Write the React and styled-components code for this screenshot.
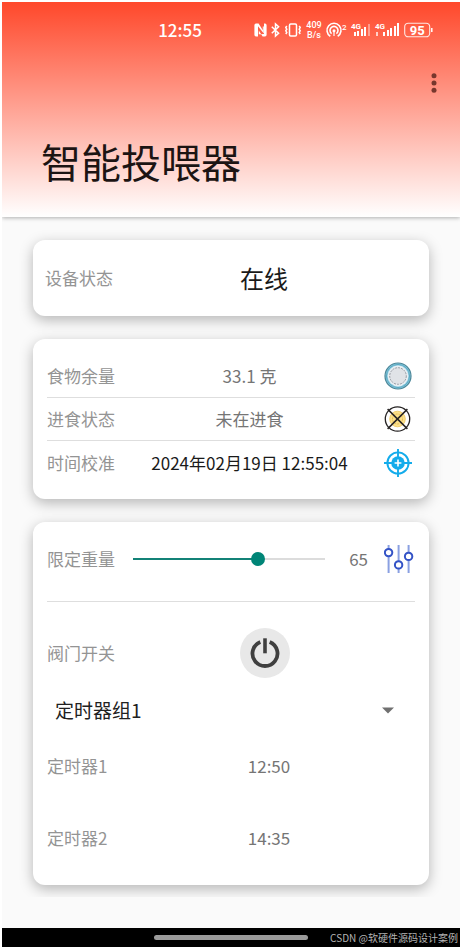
import React, { useState } from 'react';
import styled, { createGlobalStyle } from 'styled-components';

const GlobalStyle = createGlobalStyle`
  * {
    box-sizing: border-box;
  }
  body {
    margin: 0;
    background: #fff;
    font-family: 'Noto Sans CJK SC', 'Noto Sans', sans-serif;
    font-size: 17px;
    line-height: 24px;
    color: #212121;
  }
  button, select {
    font: inherit;
    color: inherit;
    border: 0;
    padding: 0;
    background: none;
    cursor: pointer;
  }
`;

const Page = styled.div`
  display: flex;
  flex-direction: column;
  min-height: 100vh;
  padding: 2px;
`;

const Header = styled.header`
  position: relative;
  z-index: 1;
  height: 215px;
  background: linear-gradient(#ff492b, #ff4f33 4%, #fff);
  box-shadow: 0 1px 4px rgba(0, 0, 0, 0.3);
  clip-path: inset(0 0 -8px 0);
`;

const StatusBar = styled.div`
  display: flex;
  align-items: center;
  justify-content: flex-end;
  height: 55px;
  padding-right: 27px;
  color: #fff;
  svg {
    display: block;
    flex: none;
    overflow: visible;
    font-family: Roboto, sans-serif;
  }
`;

const Clock = styled.time`
  margin-right: 52px;
  font-weight: 500;
`;

const StatusIcons = styled.div`
  display: flex;
  align-items: center;
  gap: 4px;
`;

const NetSpeed = styled.div`
  width: 16px;
  font-family: Roboto, sans-serif;
  font-size: 9px;
  line-height: 10px;
  font-weight: 500;
  text-align: center;
`;

const Toolbar = styled.div`
  display: flex;
  justify-content: flex-end;
  padding: 6px 14px 0 0;
`;

const MenuButton = styled.button`
  display: grid;
  place-items: center;
  width: 24px;
  height: 40px;
`;

const Title = styled.h1`
  margin: 30px 0 0 39px;
  font-size: 40px;
  line-height: 56px;
  font-weight: 400;
  color: #1c1413;
`;

const Content = styled.main`
  display: flex;
  flex-direction: column;
  gap: 23px;
  padding: 23px 31px 12px;
  overflow: hidden;
  background: #fafafa;
`;

const Filler = styled.div`
  flex: 1;
  min-height: 31px;
  background: #fafafa;
`;

const Card = styled.section`
  padding: ${(props) => props.$padding || '16px 14px 15px'};
  border-radius: 12px;
  background: #fff;
  box-shadow: 0 4px 14px rgba(0, 0, 0, 0.28);
`;

const Row = styled.div`
  display: flex;
  align-items: center;
  height: ${(props) => props.$height || 43}px;
  padding-right: ${(props) => (props.$icon ? 3 : 0)}px;
  border-bottom: ${(props) => (props.$line ? '1px solid #dedede' : '0')};
  svg {
    display: block;
  }
`;

const Label = styled.span`
  flex: none;
  min-width: ${(props) => (props.$wide ? 76 : 68)}px;
  color: #949494;
`;

const Value = styled.span`
  flex: 1;
  text-align: center;
  white-space: nowrap;
  font-size: ${(props) => (props.$large ? 24 : 17)}px;
  color: ${(props) => (props.$dark ? '#1a1a1a' : '#757575')};
`;

const IconButton = styled.button`
  flex: none;
  width: 28px;
  height: 28px;
`;

const WeightRow = styled(Row)`
  margin-bottom: 20px;
`;

const Rule = styled.hr`
  margin: 0;
  border: 0;
  border-top: 1px solid #dedede;
`;

const Slider = styled.input`
  flex: 1;
  min-width: 0;
  height: 24px;
  margin: 0 0 0 11px;
  appearance: none;
  background: none;
  &::-webkit-slider-runnable-track {
    height: 14px;
    background: linear-gradient(to right, #138277 var(--fill), #dcdcdc var(--fill)) center /
      calc(100% - 14px) 2px no-repeat;
  }
  &::-webkit-slider-thumb {
    appearance: none;
    width: 14px;
    height: 14px;
    border-radius: 50%;
    background: #008577;
  }
`;

const Weight = styled.output`
  width: 36px;
  margin-right: 16px;
  text-align: right;
  color: #757575;
`;

const ValveRow = styled(Row)`
  margin-top: 26px;
`;

const PowerWrap = styled.div`
  flex: 1;
  display: flex;
  justify-content: center;
`;

const PowerButton = styled.button`
  display: grid;
  place-items: center;
  width: 50px;
  height: 50px;
  border-radius: 50%;
  background: #e8e8e8;
`;

const GroupPicker = styled.div`
  position: relative;
  margin-top: 12px;
  select {
    width: 100%;
    height: 40px;
    padding-left: 8px;
    appearance: none;
    font-size: 19px;
  }
  svg {
    position: absolute;
    top: 17px;
    right: 21px;
    pointer-events: none;
  }
`;

const NavBar = styled.footer`
  display: grid;
  grid-template-columns: minmax(0, 1fr) 154px minmax(0, 1fr);
  align-items: center;
  height: 19px;
  background: #000;
`;

const Handle = styled.div`
  grid-column: 2;
  height: 5px;
  border-radius: 3px;
  background: #9b9b9b;
`;

const Credit = styled.small`
  padding-right: 2px;
  font-size: 10px;
  line-height: 16px;
  text-align: right;
  white-space: nowrap;
  color: #b4b4b4;
`;

const NfcIcon = () => (
  <svg width="13" height="14" viewBox="0 0 13 14" fill="currentColor">
    <path d="M2 .6h2.6l4.2 6.6V3.4h1v7L4 3.2v10.2H2A1.6 1.6 0 0 1 .4 11.8V2.2A1.6 1.6 0 0 1 2 .6z" />
    <path d="M11 13.4H8.6L4.8 7.6v3.6H5L10 11V.6h1a1.6 1.6 0 0 1 1.6 1.6v9.6a1.6 1.6 0 0 1-1.6 1.6z" />
  </svg>
);

const BluetoothIcon = () => (
  <svg width="9" height="14" viewBox="0 0 9 14" fill="none" stroke="currentColor" strokeWidth="1.5">
    <path d="M.8 3.8l6.8 6.4L4.5 13V1l3.1 2.8L.8 10.2" />
  </svg>
);

const VibrateIcon = () => (
  <svg width="18" height="14" viewBox="0 0 18 14" fill="none" stroke="currentColor" strokeWidth="1.5">
    <rect x="5.5" y="1" width="7" height="12" rx="1.2" />
    <path d="M2.8 3l-1 1.6 1 1.6-1 1.6 1 1.6-1 1.6M15.2 3l1 1.6-1 1.6 1 1.6-1 1.6 1 1.6" />
  </svg>
);

const HotspotIcon = () => (
  <svg width="21" height="16" viewBox="0 0 21 16" fill="none" stroke="currentColor" strokeWidth="1.6">
    <path d="M4.3 14.2a7 7 0 1 1 7.4 0" />
    <path d="M5.6 11.6a4 4 0 1 1 4.8 0" />
    <circle cx="8" cy="8.8" r="1.5" fill="currentColor" stroke="none" />
    <path d="M8 9v5" strokeWidth="1.2" />
    <text x="16" y="8" fontSize="8" fontWeight="500" fill="currentColor" stroke="none">2</text>
  </svg>
);

const SignalIcon = ({ bars, width }) => (
  <svg width={width} height="17" viewBox={`0 0 ${width} 17`} fill="currentColor">
    <text x="0" y="8" fontSize="8" fontWeight="700">4G</text>
    {bars.map(([x, h, opacity]) => (
      <rect key={x} x={x} y={15 - h} width="2" height={h} opacity={opacity} />
    ))}
  </svg>
);

const BatteryIcon = () => (
  <svg width="29" height="16" viewBox="0 0 29 16" fill="none" stroke="currentColor">
    <rect x=".7" y="1.2" width="25" height="13.6" rx="3.6" strokeWidth="1.1" opacity=".85" />
    <path d="M27.8 6v4" strokeWidth="1.5" />
    <text x="13.2" y="13" fontSize="13" fontWeight="700" textAnchor="middle" fill="currentColor" stroke="none">95</text>
  </svg>
);

const DotsIcon = () => (
  <svg width="6" height="20" viewBox="0 0 6 20" fill="#77372d">
    <circle cx="3" cy="2.8" r="2.5" />
    <circle cx="3" cy="10" r="2.5" />
    <circle cx="3" cy="17.2" r="2.5" />
  </svg>
);

const PlateIcon = () => (
  <svg width="28" height="28" viewBox="0 0 28 28">
    <circle cx="14" cy="14" r="13" fill="#8dcbe0" stroke="#4b8698" strokeWidth="1.2" />
    <circle cx="14" cy="14" r="11.6" fill="none" stroke="#5aa9c2" strokeWidth="1" />
    <circle cx="14" cy="14" r="10.4" fill="#e9eff3" />
    <circle cx="14" cy="14" r="8.3" fill="#e0e3e7" stroke="#85888f" strokeWidth=".8" strokeDasharray="2 1" />
  </svg>
);

const NotEatingIcon = () => (
  <svg width="28" height="28" viewBox="0 0 28 28" fill="none" stroke="#262323">
    <circle cx="13.5" cy="14" r="7.8" fill="#fbe08a" stroke="#edc75c" strokeWidth=".8" />
    <circle cx="13.5" cy="14" r="5" stroke="#d9a93c" strokeWidth=".7" strokeDasharray="2 1" />
    <circle cx="13.5" cy="14" r="12.2" strokeWidth="1.3" />
    <path d="M3.6 4.1l19.8 19.8M23.4 4.1L3.6 23.9" strokeWidth="1.5" />
  </svg>
);

const CalibrateIcon = () => (
  <svg width="28" height="28" viewBox="0 0 28 28" fill="none" stroke="#14aceb" strokeWidth="1.9">
    <circle cx="14" cy="14" r="10.6" />
    <circle cx="14" cy="14" r="6.8" fill="#14aceb" stroke="none" />
    <path d="M14 0v8M14 20v8M0 14h8M20 14h8" />
    <path d="M14 10.6v6.8M10.6 14h6.8" stroke="#fff" strokeWidth="1.6" />
  </svg>
);

const TuneIcon = () => (
  <svg width="30" height="28" viewBox="0 0 30 28" fill="#fff">
    <path d="M4.6 0v28M14.6 0v28M24.6 0v28" stroke="#8aa0e2" strokeWidth="2" />
    <g stroke="#3453c6" strokeWidth="2">
      <circle cx="4.6" cy="7.6" r="3.7" />
      <circle cx="14.6" cy="19.9" r="3.7" />
      <circle cx="24.6" cy="11.4" r="3.7" />
    </g>
  </svg>
);

const PowerIcon = () => (
  <svg width="32" height="32" viewBox="0 0 32 32" fill="none" stroke="#3f3f3f">
    <path d="M11.3 4.9a12.5 12.5 0 1 0 9.4 0" strokeWidth="3.8" />
    <path d="M16 1.3v15" strokeWidth="3.6" />
  </svg>
);

const timers = [
  { name: '定时器1', time: '12:50' },
  { name: '定时器2', time: '14:35' },
];

function App() {
  const [weight, setWeight] = useState(65);

  return (
    <>
      <GlobalStyle />
      <Page>
        {/* Header with system status bar */}
        <Header>
          <StatusBar>
            <Clock>12:55</Clock>
            <StatusIcons>
              <NfcIcon />
              <BluetoothIcon />
              <VibrateIcon />
              <NetSpeed>
                409
                <br />
                B/s
              </NetSpeed>
              <HotspotIcon />
              <SignalIcon width={20} bars={[[3, 4], [6, 5], [10, 7], [13, 9], [17, 12, 0.4]]} />
              <SignalIcon width={25} bars={[[1, 4, 0.7], [8, 4], [12, 6], [15, 8], [19, 10], [22, 13]]} />
              <BatteryIcon />
            </StatusIcons>
          </StatusBar>
          <Toolbar>
            <MenuButton aria-label="更多">
              <DotsIcon />
            </MenuButton>
          </Toolbar>
          <Title>智能投喂器</Title>
        </Header>

        <Content>
          <Card $padding="0 14px 0 12px">
            <Row $height={76}>
              <Label>设备状态</Label>
              <Value $large $dark>在线</Value>
            </Row>
          </Card>

          <Card>
            <Row $icon $line>
              <Label>食物余量</Label>
              <Value>33.1 克</Value>
              <IconButton aria-label="食物余量"><PlateIcon /></IconButton>
            </Row>
            <Row $icon $line>
              <Label>进食状态</Label>
              <Value>未在进食</Value>
              <IconButton aria-label="进食状态"><NotEatingIcon /></IconButton>
            </Row>
            <Row $icon>
              <Label>时间校准</Label>
              <Value $dark>2024年02月19日 12:55:04</Value>
              <IconButton aria-label="时间校准"><CalibrateIcon /></IconButton>
            </Row>
          </Card>

          <Card $padding="15px 14px 11px">
            <WeightRow $icon $height={44}>
              <Label as="label" htmlFor="weight">限定重量</Label>
              <Slider
                id="weight"
                type="range"
                min="0"
                max="100"
                value={weight}
                onChange={(e) => setWeight(Number(e.target.value))}
                style={{ '--fill': `${weight}%` }}
              />
              <Weight htmlFor="weight">{weight}</Weight>
              <IconButton aria-label="设置重量"><TuneIcon /></IconButton>
            </WeightRow>
            <Rule />
            <ValveRow $height={50}>
              <Label>阀门开关</Label>
              <PowerWrap>
                <PowerButton aria-label="阀门开关"><PowerIcon /></PowerButton>
              </PowerWrap>
            </ValveRow>
            <GroupPicker>
              <select aria-label="定时器组" defaultValue="1">
                <option value="1">定时器组1</option>
              </select>
              <svg width="12" height="7" viewBox="0 0 12 7" fill="#707070">
                <path d="M0 .5h12L6 6.5z" />
              </svg>
            </GroupPicker>
            {timers.map((timer) => (
              <Row key={timer.name} $height={72}>
                <Label $wide>{timer.name}</Label>
                <Value>{timer.time}</Value>
              </Row>
            ))}
          </Card>
        </Content>
        <Filler />

        <NavBar>
          <Handle />
          <Credit>CSDN @软硬件源码设计案例</Credit>
        </NavBar>
      </Page>
    </>
  );
}

export default App;
